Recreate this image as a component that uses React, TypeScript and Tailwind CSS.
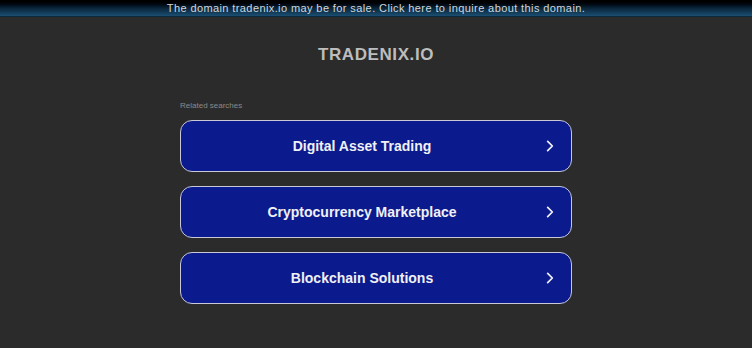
import React from 'react';

const links = ['Digital Asset Trading', 'Cryptocurrency Marketplace', 'Blockchain Solutions'];

function Chevron() {
  return (
    <svg className="w-[14px] h-[14px] shrink-0" viewBox="0 0 24 24" fill="none" stroke="currentColor" strokeWidth={3} strokeLinecap="round" strokeLinejoin="round">
      <path d="M8 4l8 8-8 8" />
    </svg>
  );
}

export default function App() {
  return (
    <div className="w-[752px] h-[348px] bg-[#2b2b2b] overflow-hidden" style={{ fontFamily: '"Liberation Sans", Arial, sans-serif' }}>
      {/* Sale banner */}
      <div className="h-[17px] flex items-center justify-center bg-gradient-to-b from-[#000000] via-[#0a2438] to-[#1a4f73] border-b border-[#0b2a40]">
        <span className="text-[11px] text-[#d0d6dc] tracking-[0.4px] leading-none">
          The domain tradenix.io may be for sale. Click here to inquire about this domain.
        </span>
      </div>

      {/* Domain name */}
      <div className="flex justify-center pt-[28px]">
        <h1 className="text-[17px] font-bold text-[#bdbdbd] tracking-[0.6px] leading-[20px]">TRADENIX.IO</h1>
      </div>

      {/* Related searches */}
      <div className="w-[392px] mx-auto mt-[36px]">
        <p className="text-[8px] text-[#8a8a8a] leading-[10px] mb-[9px]">Related searches</p>
        <div className="flex flex-col gap-[14px]">
          {links.map((label) => (
            <div
              key={label}
              className="h-[52px] flex items-center rounded-[12px] border border-[#c8c8d8] bg-[#0b1b8d] text-[#f0f0f5] pr-[14px]"
            >
              <span className="flex-1 text-center text-[14px] font-bold">{label}</span>
              <Chevron />
            </div>
          ))}
        </div>
      </div>
    </div>
  );
}
